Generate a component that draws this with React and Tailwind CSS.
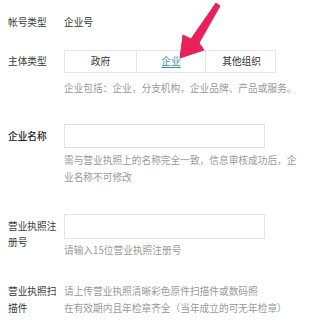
import React from "react";

const font = { fontFamily: '"Noto Sans CJK SC", "Noto Sans", sans-serif' };

const Label = ({ children, className = "" }) => (
    <div className={`w-[56px] shrink-0 text-[9.7px] text-[#3a3a3a] ${className}`}>{children}</div>
);

const Hint = ({ children, className = "" }) => (
    <div className={`text-[9.7px] leading-[17px] text-[#999] ${className}`}>{children}</div>
);

const Arrow = () => (
    <svg className="absolute left-0 top-0 pointer-events-none" width="310" height="80" viewBox="0 0 310 80">
        <polygon
            points="216,3 220,6 199,43 204,50 180,58 183,35 191,39"
            fill="#e8215b"
            stroke="#e8215b"
            strokeWidth="1"
            strokeLinejoin="round"
        />
    </svg>
);

export default function App() {
    return (
        <div className="relative w-[310px] h-[331px] bg-white pl-2 pt-[14px] overflow-hidden" style={font}>
            {/* 帐号类型 */}
            <div className="flex leading-4">
                <Label>帐号类型</Label>
                <div className="text-[9.7px] text-[#333]">企业号</div>
            </div>

            {/* 主体类型 */}
            <div className="flex mt-[20px]">
                <Label className="leading-[23px]">主体类型</Label>
                <div>
                    <div className="grid grid-cols-[71px_70px_71px] w-[212px] h-[23px] border border-[#e4e4e4] text-[9.7px]">
                        <div className="flex items-center justify-center text-[#333]">政府</div>
                        <div className="flex items-center justify-center border-l border-r border-[#e4e4e4] text-[#3b8db3] underline underline-offset-2">
                            企业
                        </div>
                        <div className="flex items-center justify-center text-[#333]">其他组织</div>
                    </div>
                    <Hint className="mt-[7px]">企业包括：企业，分支机构，企业品牌、产品或服务。</Hint>
                </div>
            </div>

            {/* 企业名称 */}
            <div className="flex mt-[27px]">
                <Label className="leading-[24px] !text-[#222] font-medium">企业名称</Label>
                <div>
                    <div className="w-[201px] h-[24px] border border-[#e4e4e4]"></div>
                    <Hint className="mt-[4px] w-[236px]">需与营业执照上的名称完全一致，信息审核成功后，企业名称不可修改</Hint>
                </div>
            </div>

            {/* 营业执照注册号 */}
            <div className="flex mt-[28px]">
                <Label className="leading-4 pt-[4px]">营业执照注册号</Label>
                <div>
                    <div className="w-[201px] h-[25px] border border-[#e4e4e4]"></div>
                    <Hint className="mt-[3px]">请输入15位营业执照注册号</Hint>
                </div>
            </div>

            {/* 营业执照扫描件 */}
            <div className="flex mt-[24px]">
                <Label className="leading-[17px]">营业执照扫描件</Label>
                <div>
                    <Hint>请上传营业执照清晰彩色原件扫描件或数码照</Hint>
                    <Hint>在有效期内且年检章齐全（当年成立的可无年检章）</Hint>
                </div>
            </div>

            <Arrow />
        </div>
    );
}
